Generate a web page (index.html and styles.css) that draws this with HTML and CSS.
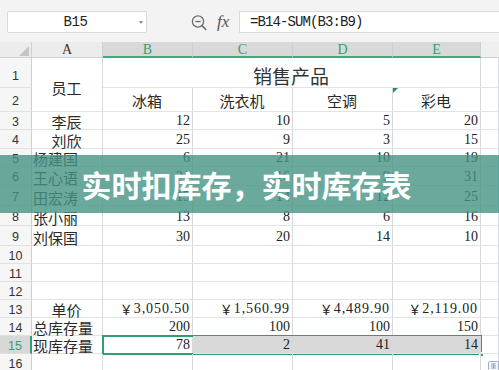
FILE: index.html
```html
<!DOCTYPE html>
<html lang="zh-CN">
<head>
<meta charset="utf-8">
<title>实时库存表</title>
<link rel="stylesheet" href="styles.css">
</head>
<body>
<div class="toolbar">
  <div class="namebox"><span class="namebox-text">B15</span><span class="caret"></span></div>
  <svg class="zoom-ico" width="16" height="17" viewBox="0 0 16 17"><circle cx="7" cy="7.5" r="5.6" fill="none" stroke="#6b6b6b" stroke-width="1.3"/><path d="M4.3 7.5h5.4" stroke="#6b6b6b" stroke-width="1.3"/><path d="M11.2 11.7l3.6 3.8" stroke="#6b6b6b" stroke-width="1.6" stroke-linecap="round"/></svg>
  <span class="fx">fx</span>
  <div class="formula">=B14-SUM(B3:B9)</div>
</div>

<div class="sheet">
  <div class="corner"><svg width="10" height="10" viewBox="0 0 10 10"><polygon points="10,0 10,10 0,10" fill="#c6c6c6"/></svg></div>
  <div class="ch">A</div>
  <div class="ch on">B</div>
  <div class="ch on">C</div>
  <div class="ch on">D</div>
  <div class="ch on">E</div>
  <div class="ch rest"></div>

  <div class="rh r1">1</div>
  <div class="c merge-a zh">员工</div>
  <div class="c merge-b zh big">销售产品</div>
  <div class="c"></div>

  <div class="rh">2</div>
  <div class="c zh ctr mid">冰箱</div>
  <div class="c zh ctr mid">洗衣机</div>
  <div class="c zh ctr mid">空调</div>
  <div class="c zh ctr mid flag"><svg class="tri" width="5" height="5" viewBox="0 0 5 5"><polygon points="0,0 5,0 0,5" fill="#2d8a55"/></svg>彩电</div>
  <div class="c"></div>

  <div class="rh">3</div>
  <div class="c zh ctr">李辰</div>
  <div class="c n">12</div><div class="c n">10</div><div class="c n">5</div><div class="c n">20</div><div class="c"></div>

  <div class="rh">4</div>
  <div class="c zh ctr">刘欣</div>
  <div class="c n">25</div><div class="c n">9</div><div class="c n">3</div><div class="c n">15</div><div class="c"></div>

  <div class="rh">5</div>
  <div class="c zh">杨建国</div>
  <div class="c n">6</div><div class="c n">21</div><div class="c n">10</div><div class="c n">19</div><div class="c"></div>

  <div class="rh">6</div>
  <div class="c zh">王心语</div>
  <div class="c n">21</div><div class="c n">16</div><div class="c n">9</div><div class="c n">31</div><div class="c"></div>

  <div class="rh">7</div>
  <div class="c zh">田宏涛</div>
  <div class="c n">15</div><div class="c n">14</div><div class="c n">12</div><div class="c n">25</div><div class="c"></div>

  <div class="rh">8</div>
  <div class="c zh">张小丽</div>
  <div class="c n">13</div><div class="c n">8</div><div class="c n">6</div><div class="c n">16</div><div class="c"></div>

  <div class="rh">9</div>
  <div class="c zh">刘保国</div>
  <div class="c n">30</div><div class="c n">20</div><div class="c n">14</div><div class="c n">10</div><div class="c"></div>

  <div class="rh">10</div>
  <div class="c"></div><div class="c"></div><div class="c"></div><div class="c"></div><div class="c"></div><div class="c"></div>

  <div class="rh">11</div>
  <div class="c"></div><div class="c"></div><div class="c"></div><div class="c"></div><div class="c"></div><div class="c"></div>

  <div class="rh">12</div>
  <div class="c"></div><div class="c"></div><div class="c"></div><div class="c"></div><div class="c"></div><div class="c"></div>

  <div class="rh">13</div>
  <div class="c zh ctr">单价</div>
  <div class="c n money"><span class="yen">￥</span>3,050.50</div>
  <div class="c n money"><span class="yen">￥</span>1,560.99</div>
  <div class="c n money"><span class="yen">￥</span>4,489.90</div>
  <div class="c n money"><span class="yen">￥</span>2,119.00</div>
  <div class="c"></div>

  <div class="rh">14</div>
  <div class="c zh">总库存量</div>
  <div class="c n">200</div><div class="c n">100</div><div class="c n">100</div><div class="c n">150</div><div class="c"></div>

  <div class="rh on">15</div>
  <div class="c zh">现库存量</div>
  <div class="c n active">78<div class="selbox"><span class="handle"></span></div></div>
  <div class="c n hl">2</div><div class="c n hl">41</div><div class="c n hl">14</div><div class="c"></div>

  <div class="rh">16</div>
  <div class="c"></div><div class="c"></div><div class="c"></div><div class="c"></div><div class="c"></div><div class="c"></div>
</div>

<div class="banner">实时扣库存，实时库存表</div>

<svg class="quick" width="11" height="10" viewBox="0 0 11 10"><rect x="0.5" y="0.5" width="10" height="9" rx="1" fill="#f3f5f8" stroke="#9fb0c4"/><path d="M3 3h5M3 5h5M3 7h5M5.5 2.5v5" stroke="#7f98b5" stroke-width="0.8"/></svg>
</body>
</html>
```

FILE: styles.css
```css
* { box-sizing: border-box; margin: 0; padding: 0; }

html, body {
  width: 499px;
  height: 370px;
  overflow: hidden;
  background: #ffffff;
}

body {
  position: relative;
  font-family: "Liberation Serif", "Noto Sans CJK SC", serif;
  color: #222;
}

/* ---------- formula bar ---------- */
.toolbar {
  height: 42px;
  background: #f3f3f3;
  display: flex;
  align-items: flex-start;
  padding: 11px 0 0 7px;
}

.namebox {
  width: 140px;
  height: 22px;
  background: #fff;
  border: 1px solid #dadada;
  border-radius: 2px;
  display: flex;
  align-items: center;
}

.namebox-text {
  flex: 1;
  text-align: center;
  font-family: "Liberation Mono", monospace;
  font-size: 14px;
  letter-spacing: -0.4px;
  color: #222;
  padding-left: 4px;
}

.caret {
  width: 0;
  height: 0;
  border-left: 2.5px solid transparent;
  border-right: 2.5px solid transparent;
  border-top: 3px solid #8a8a8a;
  margin-right: 3px;
}

.zoom-ico {
  margin-left: 44px;
  margin-top: 3px;
  flex: none;
}

.fx {
  width: 22px;
  margin-left: 10px;
  font-family: "Liberation Serif", serif;
  font-style: italic;
  font-size: 17px;
  line-height: 22px;
  color: #555;
}

.formula {
  flex: 1;
  height: 22px;
  background: #fff;
  border: 1px solid #dadada;
  border-right: 0;
  display: flex;
  align-items: center;
  padding-left: 10px;
  font-family: "Liberation Mono", monospace;
  font-size: 14px;
  letter-spacing: -0.9px;
  color: #222;
}

/* ---------- sheet grid ---------- */
.sheet {
  display: grid;
  grid-template-columns: 32px 71px 90px 100px 100px 88px 18px;
  grid-template-rows: 16px 30px 24px 18px 19px 18px 19px 20px 20px 20px 18px 18px 18px 18px 18px 18px 18px;
}

.corner {
  background: #ececec;
  border-right: 1px solid #cfcfcf;
  border-bottom: 1px solid #cfcfcf;
  display: flex;
  justify-content: flex-end;
  align-items: flex-end;
  padding: 0 2px 1px 0;
}

.ch {
  background: #ececec;
  border-right: 1px solid #cfcfcf;
  border-bottom: 1px solid #cfcfcf;
  display: flex;
  align-items: center;
  justify-content: center;
  font-size: 14px;
  line-height: 14px;
  color: #333;
  padding-top: 1px;
}

.ch.on {
  background: #d9d9d9;
  color: #3a9d72;
  border-bottom: 2px solid #45a97c;
}

.ch.rest {
  background: #efefef;
  border-right: 0;
}

.rh {
  background: #f6f6f6;
  border-right: 1px solid #cfcfcf;
  border-bottom: 1px solid #e0e0e0;
  display: flex;
  align-items: center;
  justify-content: center;
  font-family: "Liberation Sans", sans-serif;
  font-size: 12.5px;
  color: #333;
  padding-top: 2px;
}

.rh.r1 { padding-top: 7px; }

.rh.on {
  background: #d8d8d8;
  color: #3a9d72;
  border-right: 2px solid #2e9f72;
}

.c {
  position: relative;
  border-right: 1px solid #d6dadf;
  border-bottom: 1px solid #e1e4e7;
  display: flex;
  align-items: flex-end;
  padding: 0 2px 0 1px;
  white-space: nowrap;
  font-size: 14px;
  line-height: 14px;
  color: #222;
}

.zh {
  font-family: "Noto Sans CJK SC", sans-serif;
  font-size: 15px;
  line-height: 15px;
  color: #2a2a2a;
}

.ctr { justify-content: center; }
.mid { align-items: center; padding-top: 1px; }

.merge-a {
  grid-row: span 2;
  justify-content: center;
  align-items: center;
  padding-top: 6px;
}

.merge-b {
  grid-column: span 4;
  justify-content: center;
  align-items: center;
  padding-top: 5px;
}

.big { font-size: 19px; line-height: 19px; color: #333; }

.n {
  justify-content: flex-end;
  font-family: "Liberation Serif", serif;
  padding-bottom: 1px;
}

.money { letter-spacing: 0.9px; }

.yen {
  font-family: "Noto Sans CJK SC", sans-serif;
  font-size: 13px;
  letter-spacing: 0;
  margin-right: 1px;
}

.flag .tri {
  position: absolute;
  top: 0;
  left: 0;
}

.hl { background: #d9d9d9; }

.selbox {
  position: absolute;
  left: -1px;
  top: -1px;
  width: 380px;
  height: 20px;
  border: 2px solid #2e9f72;
}

.handle {
  position: absolute;
  right: -4px;
  bottom: -4px;
  width: 5px;
  height: 5px;
  background: #2e9f72;
  border: 1px solid #fff;
}

/* ---------- overlay banner ---------- */
.banner {
  position: absolute;
  left: 0;
  right: 0;
  top: 155px;
  height: 58px;
  background: rgba(70, 148, 133, 0.8);
  display: flex;
  align-items: center;
  justify-content: center;
  padding-right: 6px;
  font-family: "Noto Sans CJK SC", sans-serif;
  font-weight: 700;
  font-size: 30px;
  line-height: 30px;
  color: #ffffff;
}

.quick {
  position: absolute;
  left: 488px;
  top: 361px;
}
```
